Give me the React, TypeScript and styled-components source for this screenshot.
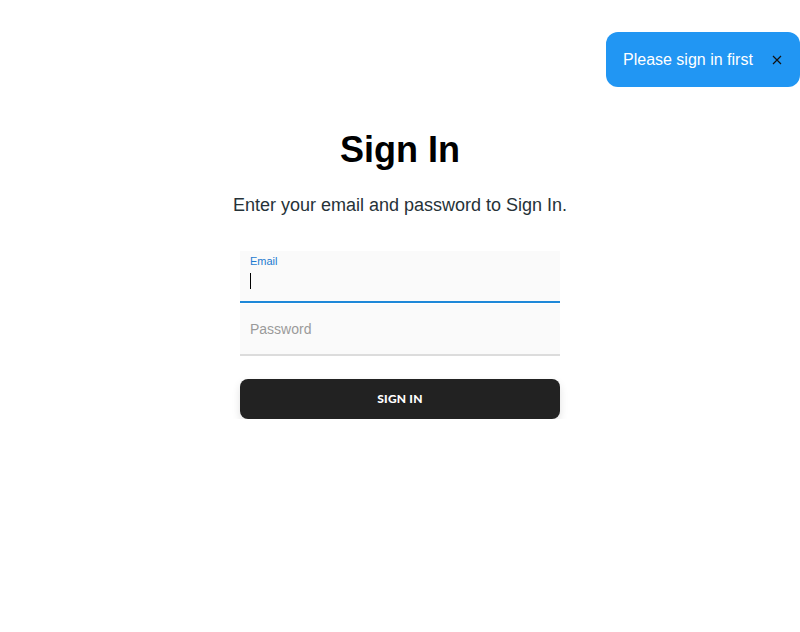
import React from "react";
import styled, { createGlobalStyle } from "styled-components";

const Global = createGlobalStyle`
  html, body { margin: 0; padding: 0; background: #fff; }
  body { font-family: "Liberation Sans", Arial, sans-serif; }
`;

const Page = styled.div`
  display: flex;
  flex-direction: column;
  align-items: center;
  padding-top: 128px;
`;

const Title = styled.h1`
  margin: 0;
  font-size: 36px;
  font-weight: 700;
  line-height: 44px;
  color: #000;
`;

const Subtitle = styled.p`
  margin: 22px 0 0;
  font-size: 18px;
  line-height: 22px;
  color: #263238;
`;

const Form = styled.form`
  width: 320px;
  margin-top: 35px;
  display: flex;
  flex-direction: column;
`;

const Field = styled.div<{ $active?: boolean }>`
  position: relative;
  height: 50px;
  background: #fafafa;
  border-bottom: 2px solid ${(p) => (p.$active ? "#1e88d8" : "#dcdcdc")};
  box-sizing: content-box;
  & + & { margin-top: 1px; }
`;

const Label = styled.span`
  position: absolute;
  left: 10px;
  top: 4px;
  font-size: 11px;
  color: #1e7bd0;
`;

const Caret = styled.span`
  position: absolute;
  left: 10px;
  top: 22px;
  width: 1px;
  height: 16px;
  background: #000;
`;

const Placeholder = styled.span`
  position: absolute;
  left: 10px;
  top: 17px;
  font-size: 14px;
  color: #9a9a9a;
`;

const Button = styled.button`
  margin-top: 23px;
  height: 40px;
  padding: 0 0 2px;
  border: none;
  border-radius: 8px;
  background: #222;
  color: #fff;
  font-family: Lato, "Liberation Sans", sans-serif;
  font-weight: 900;
  font-size: 12px;
  letter-spacing: 0.2px;
  box-shadow: 0 4px 8px rgba(0, 0, 0, 0.12);
  cursor: pointer;
`;

const Toast = styled.div`
  position: fixed;
  top: 32px;
  right: 0;
  width: 194px;
  height: 55px;
  box-sizing: border-box;
  border-radius: 12px;
  background: #2196f3;
  display: flex;
  align-items: center;
  padding: 0 17px;
  justify-content: space-between;
  color: #fff;
  font-size: 16px;
`;

const Close = styled.span`
  display: flex;
  align-items: center;
  margin-right: 1px;
`;

export default function App() {
  return (
    <>
      <Global />
      <Page>
        <Title>Sign In</Title>
        <Subtitle>Enter your email and password to Sign In.</Subtitle>
        <Form onSubmit={(e) => e.preventDefault()}>
          <Field $active>
            <Label>Email</Label>
            <Caret />
          </Field>
          <Field>
            <Placeholder>Password</Placeholder>
          </Field>
          <Button type="submit">SIGN IN</Button>
        </Form>
      </Page>
      <Toast>
        <span>Please sign in first</span>
        <Close>
          <svg width="10" height="10" viewBox="0 0 10 10">
            <path d="M1 1L9 9M9 1L1 9" stroke="#111" strokeWidth="1.2" />
          </svg>
        </Close>
      </Toast>
    </>
  );
}
